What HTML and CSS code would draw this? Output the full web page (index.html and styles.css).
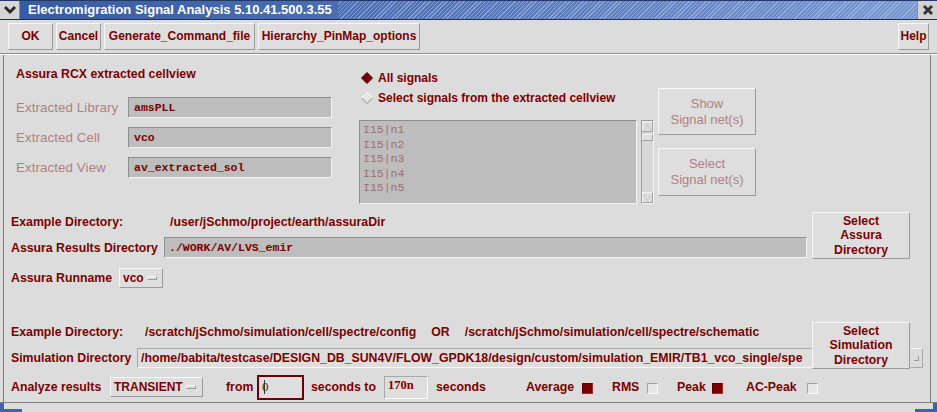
FILE: index.html
```html
<!DOCTYPE html>
<html>
<head>
<meta charset="utf-8">
<link rel="stylesheet" href="styles.css">
</head>
<body>
<div class="win">
  <div class="titlebar">
    <div class="tb-icon"><svg width="14" height="10" viewBox="0 0 14 10"><path d="M2 2 L7 7 L12 2" fill="none" stroke="#2b2b2b" stroke-width="3"/></svg></div>
    <div class="tb-title">Electromigration Signal Analysis 5.10.41.500.3.55</div>
    <div class="tb-stripes"></div>
    <div class="tb-close"><svg width="12" height="12" viewBox="0 0 12 12"><path d="M2 2 L10 10 M10 2 L2 10" stroke="#333" stroke-width="3"/></svg></div>
  </div>

  <div class="toolbar">
    <div class="btn tbtn w-ok">OK</div>
    <div class="btn tbtn w-cancel">Cancel</div>
    <div class="btn tbtn w-gen">Generate_Command_file</div>
    <div class="btn tbtn w-hier">Hierarchy_PinMap_options</div>
    <div class="spacer"></div>
    <div class="btn tbtn w-help">Help</div>
  </div>

  <div class="main">
    <section class="cv">
      <div class="cv-left">
        <div class="heading">Assura RCX extracted cellview</div>
        <div class="cv-rows">
          <div class="cv-row"><span class="dlabel">Extracted Library</span><div class="field mono">amsPLL</div></div>
          <div class="cv-row"><span class="dlabel">Extracted Cell</span><div class="field mono">vco</div></div>
          <div class="cv-row"><span class="dlabel">Extracted View</span><div class="field mono">av_extracted_sol</div></div>
        </div>
      </div>
      <div class="cv-right">
        <div class="sigcol">
          <div class="radio"><svg class="diamond" width="12" height="12" viewBox="0 0 12 12"><polygon points="6,0.5 11.5,6 6,11.5 0.5,6" fill="#7a0000" stroke="#4a0000" stroke-width="1"/></svg><span>All signals</span></div>
          <div class="radio r2"><svg class="diamond" width="12" height="12" viewBox="0 0 12 12"><polygon points="6,0.5 11.5,6 6,11.5 0.5,6" fill="#e4e4e4"/><polyline points="0.5,6 6,0.5 11.5,6" fill="none" stroke="#ffffff" stroke-width="1"/><polyline points="0.5,6 6,11.5 11.5,6" fill="none" stroke="#8a8a8a" stroke-width="1"/></svg><span>Select signals from the extracted cellview</span></div>
          <div class="listwrap">
            <div class="list">
              <div>I15|n1</div>
              <div>I15|n2</div>
              <div>I15|n3</div>
              <div>I15|n4</div>
              <div>I15|n5</div>
            </div>
            <div class="scroll">
              <div class="sarrow"><svg width="11" height="10" viewBox="0 0 11 10"><path d="M1.5 8.5 L5.5 1.5 L9.5 8.5" fill="none" stroke="#a8a8a8" stroke-dasharray="1 1"/></svg></div>
              <div class="sthumb"></div>
              <div class="sfill"></div>
              <div class="sarrow"><svg width="11" height="10" viewBox="0 0 11 10"><path d="M1.5 1.5 L5.5 8.5 L9.5 1.5" fill="none" stroke="#a8a8a8" stroke-dasharray="1 1"/></svg></div>
            </div>
          </div>
        </div>
        <div class="btncol">
          <div class="btn bigbtn disabled">Show<br>Signal net(s)</div>
          <div class="btn bigbtn disabled b2">Select<br>Signal net(s)</div>
        </div>
      </div>
    </section>

    <section class="assura">
      <div class="as-left">
        <div class="row ex1"><span class="lab w-ex1">Example Directory:</span><span>/user/jSchmo/project/earth/assuraDir</span></div>
        <div class="row ard"><span class="lab w-ard">Assura Results Directory</span><div class="field mono grow">./WORK/AV/LVS_emir</div></div>
        <div class="row arn"><span class="lab w-arn">Assura Runname</span><div class="combo w-vco">vco<span class="cmark"></span></div></div>
      </div>
      <div class="btn bigbtn sel as-btn">Select<br>Assura<br>Directory</div>
    </section>

    <section class="sim">
      <div class="sim-top">
        <div class="sim-left">
          <div class="row ex2"><span class="lab w-ex2">Example Directory:</span><span>/scratch/jSchmo/simulation/cell/spectre/config</span><span class="or">OR</span><span>/scratch/jSchmo/simulation/cell/spectre/schematic</span></div>
          <div class="row sdr"><span class="lab w-sdr">Simulation Directory</span><div class="sfield grow">/home/babita/testcase/DESIGN_DB_SUN4V/FLOW_GPDK18/design/custom/simulation_EMIR/TB1_vco_single/spe</div></div>
        </div>
        <div class="btn bigbtn sel sim-btn">Select<br>Simulation<br>Directory</div>
        <div class="stub"><span class="stubmark"></span></div>
      </div>
      <div class="analyze">
        <span class="lab w-an">Analyze results</span>
        <div class="combo w-tr">TRANSIENT<span class="cmark"></span></div>
        <span class="t-from">from</span>
        <div class="in-from">0<span class="caret"></span></div>
        <span class="t-secto">seconds to</span>
        <div class="in-to">170n</div>
        <span class="t-sec">seconds</span>
        <span class="t-avg">Average</span><span class="cb on"></span>
        <span class="t-rms">RMS</span><span class="cb"></span>
        <span class="t-peak">Peak</span><span class="cb on"></span>
        <span class="t-ac">AC-Peak</span><span class="cb"></span>
      </div>
    </section>
  </div>

  <div class="bottom">
    <div class="corner left"></div>
    <div class="bmid"></div>
    <div class="corner right"></div>
  </div>
</div>
</body>
</html>
```

FILE: styles.css
```css
* { box-sizing: border-box; }
html, body { margin: 0; padding: 0; }
body {
  width: 937px;
  height: 412px;
  overflow: hidden;
  background: #dcdcdc;
  font-family: "Liberation Sans", Arial, sans-serif;
  font-weight: bold;
  font-size: 12.3px;
  color: #7b0000;
}
.win { width: 937px; height: 412px; display: flex; flex-direction: column; }

/* title bar */
.titlebar {
  height: 20px;
  display: flex;
  background: linear-gradient(90deg, #365aa3 0%, #4d70b4 40%, #7b98d0 100%);
  border-top: 1px solid #26386a;
  border-bottom: 1px solid #1f2f5a;
}
.tb-icon {
  width: 20px; height: 18px;
  background: #d6d6d6;
  border-right: 1px solid #8a8a8a;
  display: flex; align-items: center; justify-content: center;
}
.tb-title {
  color: #fff;
  font-size: 13px;
  line-height: 18px;
  padding-left: 8px;
  width: 318px;
  white-space: nowrap;
}
.tb-stripes {
  flex: 1;
  background: repeating-linear-gradient(135deg, rgba(255,255,255,0) 0 2px, rgba(200,215,245,0.45) 2px 3px);
}
.tb-close {
  width: 20px; height: 18px;
  background: #d2d2d2;
  border-left: 1px solid #8a8a8a;
  display: flex; align-items: center; justify-content: center;
}

/* toolbar */
.toolbar {
  height: 34px;
  display: flex;
  align-items: flex-start;
  padding: 3px 8px 0 8px;
  border-bottom: 1px solid #8c8c8c;
  box-shadow: 0 1px 0 #ffffff;
}
.btn {
  background: #dedede;
  border: 1px solid;
  border-color: #f7f7f7 #9a9a9a #9a9a9a #f7f7f7;
  text-align: center;
}
.tbtn { height: 27px; line-height: 25px; font-size: 12px; margin-right: 3px; }
.w-ok { width: 45px; }
.w-cancel { width: 45px; }
.w-gen { width: 151px; }
.w-hier { width: 162px; }
.w-help { width: 31px; margin-right: 0; }
.spacer { flex: 1; }

/* main */
.main {
  margin-left: 3px;
  margin-top: 1px;
  width: 928px;
  height: 347px;
  border-left: 1px solid #7c7c7c;
  border-right: 1px solid #7c7c7c;
  display: flex;
  flex-direction: column;
}

/* cellview section */
.cv { height: 150px; display: flex; }
.cv-left { width: 355px; padding: 12px 0 0 12px; }
.heading { line-height: 14px; }
.cv-rows { margin-top: 16px; display: flex; flex-direction: column; gap: 9px; }
.cv-row { height: 21px; display: flex; align-items: center; }
.dlabel {
  width: 112px;
  font-weight: normal;
  font-size: 13.3px;
  color: #b08080;
  letter-spacing: 0.1px;
}
.field {
  height: 21px;
  background: #bdbdbd;
  border: 1px solid;
  border-color: #8e8e8e #f2f2f2 #f2f2f2 #8e8e8e;
  padding-left: 5px;
  line-height: 19px;
  white-space: nowrap;
  overflow: hidden;
}
.cv-row .field { width: 204px; }
.mono { font-family: "Liberation Mono", "Courier New", monospace; font-size: 11.5px; font-weight: bold; }

.cv-right { display: flex; }
.sigcol { width: 295px; padding-top: 16px; }
.radio { height: 14px; display: flex; align-items: center; line-height: 14px; font-size: 12px; }
.radio .diamond { margin-left: 2px; margin-right: 5px; flex: none; }
.radio.r2 { margin-top: 6px; }
.listwrap { margin-top: 15px; display: flex; gap: 4px; height: 84px; }
.list {
  width: 278px; height: 84px;
  background: #bdbdbd;
  border: 1px solid;
  border-color: #8e8e8e #f4f4f4 #f4f4f4 #8e8e8e;
  padding: 2px 0 0 3px;
  font-family: "Liberation Mono", "Courier New", monospace;
  font-weight: normal;
  font-size: 11.5px;
  line-height: 14.6px;
  color: #a06e6e;
}
.scroll {
  width: 13px; height: 84px;
  border: 1px solid;
  border-color: #9a9a9a #f4f4f4 #f4f4f4 #9a9a9a;
  display: flex; flex-direction: column;
  background: #d8d8d8;
}
.sarrow { height: 11px; display: flex; align-items: center; justify-content: center; background: #dedede; border: 1px solid; border-color: #f4f4f4 #a0a0a0 #a0a0a0 #f4f4f4; }
.sthumb { height: 7px; margin-top: 2px; background: #dedede; border: 1px solid; border-color: #f4f4f4 #a0a0a0 #a0a0a0 #f4f4f4; }
.sfill { flex: 1; }

.btncol { margin-left: 4px; padding-top: 33px; display: flex; flex-direction: column; }
.bigbtn { width: 98px; display: flex; flex-direction: column; justify-content: center; align-items: center; }
.btncol .bigbtn { height: 47px; }
.btncol .b2 { margin-top: 13px; height: 48px; }
.disabled { font-weight: normal; font-size: 13px; line-height: 16px; color: #b08080; }
.sel { height: 47px; line-height: 14.3px; font-size: 12.3px; }

/* generic rows */
.row { display: flex; align-items: center; white-space: nowrap; }
.lab { flex: none; }
.grow { flex: 1; }

/* assura section */
.assura { height: 110px; display: flex; }
.as-left { width: 803px; padding-left: 7px; }
.ex1 { margin-top: 10px; height: 14px; }
.w-ex1 { width: 159px; }
.ard { margin-top: 8px; height: 21px; }
.w-ard { width: 153px; }
.ard .field { padding-left: 4px; }
.arn { margin-top: 10px; height: 20px; }
.w-arn { width: 108px; }
.as-btn { margin-left: 5px; margin-top: 7px; }

.combo {
  height: 20px;
  background: #dedede;
  border: 1px solid;
  border-color: #f7f7f7 #9a9a9a #9a9a9a #f7f7f7;
  display: flex; align-items: center;
  padding-left: 3px;
  font-size: 12px;
}
.w-vco { width: 44px; }
.w-tr { width: 93px; }
.cmark {
  width: 10px; height: 4px;
  margin-left: 3px;
  border: 1px solid;
  border-color: #f7f7f7 #9a9a9a #9a9a9a #f7f7f7;
}

/* simulation section */
.sim { flex: 1; display: flex; flex-direction: column; }
.sim-top { display: flex; }
.sim-left { width: 808px; padding-left: 7px; }
.ex2 { margin-top: 10px; height: 14px; }
.w-ex2 { width: 134px; }
.or { margin: 0 15px; }
.sdr { margin-top: 9px; height: 20px; }
.w-sdr { width: 126px; }
.sfield {
  height: 20px;
  background: #dedede;
  border: 1px solid;
  border-right: none;
  border-color: #a8a8a8 transparent #f8f8f8 #a8a8a8;
  padding-left: 3px;
  line-height: 18px;
  white-space: nowrap;
  overflow: hidden;
}
.sim-btn { margin-top: 7px; }
.stub {
  margin-top: 33px;
  width: 13px; height: 20px;
  border: 1px solid;
  border-color: #f8f8f8 #a8a8a8 #a8a8a8 transparent;
  display: flex; align-items: center; justify-content: center;
}
.stubmark { width: 5px; height: 5px; border-right: 1px solid #9a9a9a; border-bottom: 1px solid #9a9a9a; }

.analyze { margin-top: 5px; height: 26px; display: flex; align-items: center; padding-left: 7px; white-space: nowrap; }
.w-an { width: 99px; }
.t-from { margin-left: 23px; width: 31px; }
.in-from {
  width: 47px; height: 25px;
  border: 2px solid #6e0000;
  background: #dedede;
  font-family: "Liberation Serif", serif;
  font-weight: normal;
  font-size: 13px;
  padding-left: 3px;
  line-height: 19px;
  display: flex; align-items: flex-start;
  color: #333;
}
.caret { display: inline-block; width: 1px; height: 14px; background: #333; margin-top: 3px; margin-left: -5px; }
.t-secto { margin-left: 7px; width: 73px; }
.in-to {
  width: 44px; height: 23px;
  border: 1px solid;
  border-color: #a8a8a8 #f8f8f8 #f8f8f8 #a8a8a8;
  background: #dedede;
  font-family: "Liberation Serif", serif;
  font-size: 12.5px;
  padding-left: 3px;
  line-height: 17px;
}
.t-sec { margin-left: 8px; width: 90px; }
.t-avg { width: 56px; }
.t-rms { margin-left: 19px; width: 35px; }
.t-peak { margin-left: 19px; width: 35px; }
.t-ac { margin-left: 23px; width: 61px; }
.cb {
  width: 11px; height: 11px;
  margin-top: 2px;
  background: #e6e6e6;
  border: 1px solid;
  border-color: #a0a0a0 #f8f8f8 #f8f8f8 #a0a0a0;
}
.cb.on { background: #7a0000; border-color: #5a0000 #9a3030 #9a3030 #5a0000; }

/* bottom frame */
.bottom { flex: 1; display: flex; border-top: 1px solid #808080; }
.corner { width: 22px; border-bottom: 3px solid #3d62b0; }
.corner.left { border-left: 4px solid #3d62b0; }
.corner.right { border-right: 4px solid #3d62b0; }
.bmid { flex: 1; }
```
